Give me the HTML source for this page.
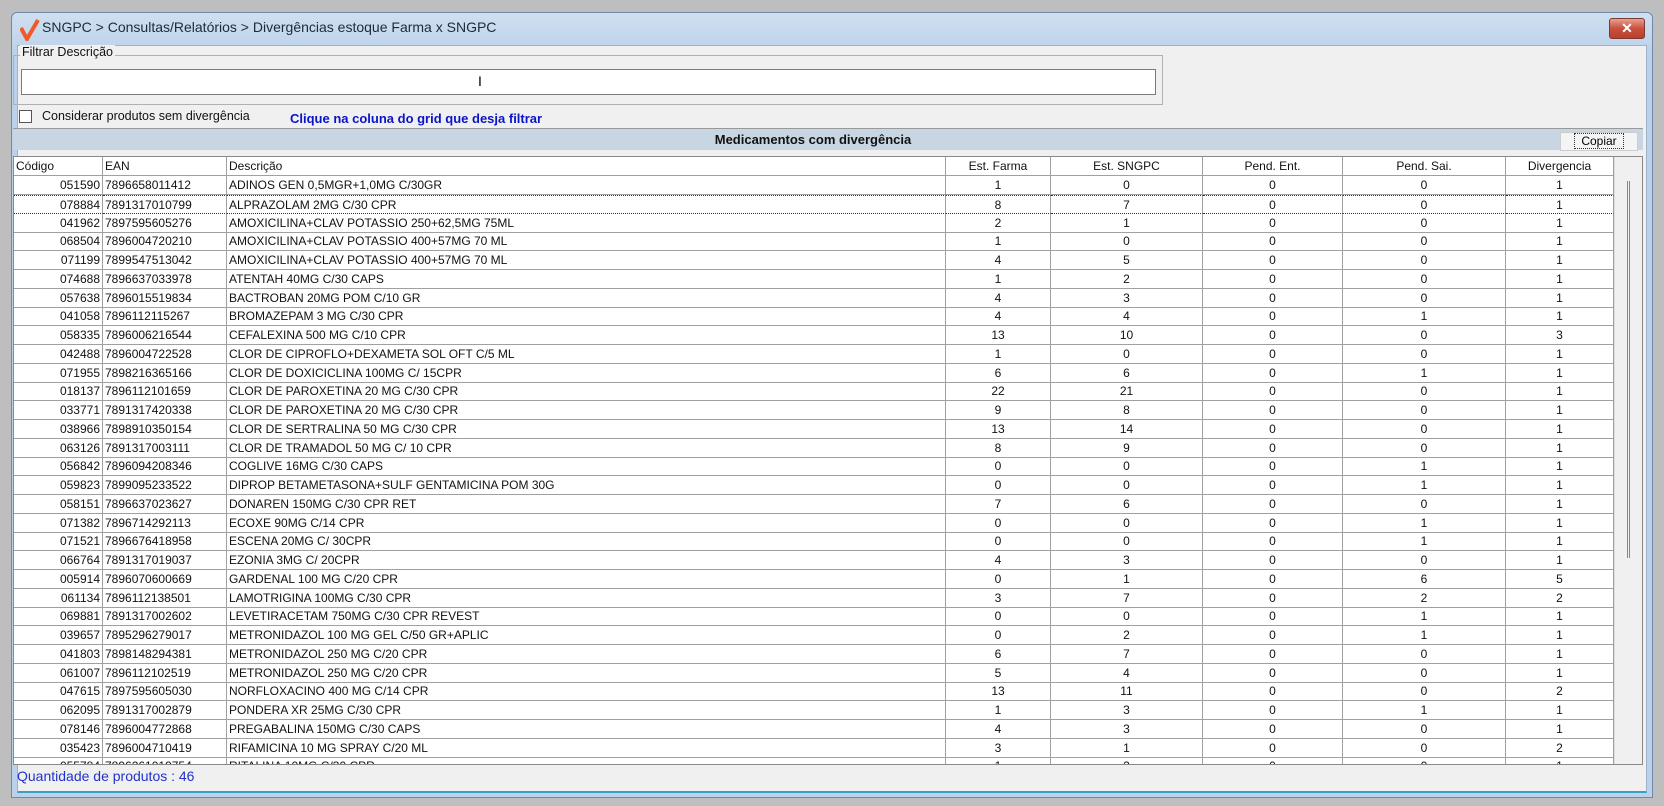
<!DOCTYPE html>
<html><head><meta charset="utf-8"><style>
*{box-sizing:border-box;margin:0;padding:0}
body{width:1664px;height:806px;background:#bebebe;font-family:"Liberation Sans",Arial,sans-serif;position:relative;overflow:hidden}
.win{position:absolute;left:11px;top:12px;width:1642px;height:786px;background:linear-gradient(#cfdff0,#bcd2ea 40px);border:1px solid #6f8aa8;border-radius:6px 6px 0 0}
.body{position:absolute;left:5px;top:32px;width:1630px;height:748px;background:#f0f0f0;border:1px solid #9fb3c8;border-bottom:2px solid #3aa0c0}
.title{position:absolute;left:42px;top:19px;font-size:14px;color:#1d2a3a}
.close{position:absolute;left:1609px;top:18px;width:36px;height:21px;border:1px solid #7a3a30;border-radius:3px;background:linear-gradient(#e8a091,#c9503c 50%,#b8402c);color:#fff;font-weight:bold;font-size:14px;text-align:center;line-height:19px}
.abs{position:absolute}
.grp{left:13px;top:55px;width:1150px;height:50px;border:1px solid #b0b0b0}
.lbl{left:20px;top:45px;font-size:12.5px;background:#f0f0f0;padding:0 2px;color:#111}
.inp{left:21px;top:69px;width:1135px;height:26px;background:#fff;border:1px solid #7a7a7a}
.chk{left:19px;top:110px;width:13px;height:13px;background:#fff;border:1px solid #555}
.ct{left:42px;top:109px;font-size:12.5px;color:#111}
.blue{left:290px;top:111px;font-size:13px;font-weight:bold;color:#0a14c8}
.hdr{left:13px;top:128px;width:1630px;height:22px;background:#c8d5e2;border-top:1px solid #999}
.hdr span{position:absolute;left:0;width:1600px;text-align:center;top:3px;font-weight:bold;font-size:13px;color:#111}
.cop{left:1560px;top:132px;width:78px;height:19px;background:#f4f4f4;border:1px solid #ccc;font-size:12px;text-align:center;line-height:17px}
.cop span{border:1px dotted #333;padding:0 6px}
.grid{left:13px;top:156px;width:1630px;height:609px;background:#fff;border:1px solid #888;overflow:hidden}
.row{position:absolute;left:0;height:19px;white-space:nowrap;font-size:12px;color:#111}
.row div{display:inline-block;height:19px;line-height:18px;border-right:1px solid #a0a0a0;border-bottom:1px solid #a0a0a0;overflow:hidden;vertical-align:top;padding:0 2px}
.h div{background:#fff;font-size:12px}
.c1{width:89px;text-align:right}.c2{width:124px}.c3{width:719px}.c4{width:105px;text-align:center}.c5{width:152px;text-align:center}.c6{width:140px;text-align:center}.c7{width:163px;text-align:center}.c8{width:108px;text-align:center}
.h .c1{text-align:left}
.sb{left:1600px;top:0;width:28px;height:609px;background:#f0f0f0;border-left:1px solid #ddd}
.sb i{position:absolute;left:12px;top:24px;width:3px;height:377px;border-left:1px solid #888;border-right:1px solid #888}
.sel div{border-top:1px dotted #333;border-bottom:1px dotted #333}
.st{left:17px;top:768px;font-size:14px;color:#2233cc}
</style></head><body>
<div class="win">
<svg class="abs" style="left:8px;top:6px" width="20" height="22" viewBox="0 0 20 22"><path d="M1 9 L7 20 L18 1" stroke="#f05a28" stroke-width="4" fill="none"/></svg>
<div class="body"></div>
</div>
<div class="title abs">SNGPC &gt; Consultas/Relatórios &gt; Divergências estoque Farma x SNGPC</div>
<div class="close">✕</div>
<div class="abs grp"></div>
<div class="abs lbl">Filtrar Descrição</div>
<div class="abs inp"></div>
<div class="abs" style="left:478px;top:73px;font-size:14px">I</div>
<div class="abs chk"></div>
<div class="abs ct">Considerar produtos sem divergência</div>
<div class="abs blue">Clique na coluna do grid que desja filtrar</div>
<div class="abs hdr"><span>Medicamentos com divergência</span></div>
<div class="abs cop"><span>Copiar</span></div>
<div class="abs grid">
<div class="row h" style="top:0"><div class="c1">Código</div><div class="c2">EAN</div><div class="c3">Descrição</div><div class="c4">Est. Farma</div><div class="c5">Est. SNGPC</div><div class="c6">Pend. Ent.</div><div class="c7">Pend. Sai.</div><div class="c8">Divergencia</div></div>
<div class="row" style="top:19px"><div class="c1">051590</div><div class="c2">7896658011412</div><div class="c3">ADINOS GEN 0,5MGR+1,0MG C/30GR</div><div class="c4">1</div><div class="c5">0</div><div class="c6">0</div><div class="c7">0</div><div class="c8">1</div></div>
<div class="row sel" style="top:37.75px"><div class="c1">078884</div><div class="c2">7891317010799</div><div class="c3">ALPRAZOLAM 2MG C/30 CPR</div><div class="c4">8</div><div class="c5">7</div><div class="c6">0</div><div class="c7">0</div><div class="c8">1</div></div>
<div class="row" style="top:56.5px"><div class="c1">041962</div><div class="c2">7897595605276</div><div class="c3">AMOXICILINA+CLAV POTASSIO 250+62,5MG 75ML</div><div class="c4">2</div><div class="c5">1</div><div class="c6">0</div><div class="c7">0</div><div class="c8">1</div></div>
<div class="row" style="top:75.25px"><div class="c1">068504</div><div class="c2">7896004720210</div><div class="c3">AMOXICILINA+CLAV POTASSIO 400+57MG 70 ML</div><div class="c4">1</div><div class="c5">0</div><div class="c6">0</div><div class="c7">0</div><div class="c8">1</div></div>
<div class="row" style="top:94px"><div class="c1">071199</div><div class="c2">7899547513042</div><div class="c3">AMOXICILINA+CLAV POTASSIO 400+57MG 70 ML</div><div class="c4">4</div><div class="c5">5</div><div class="c6">0</div><div class="c7">0</div><div class="c8">1</div></div>
<div class="row" style="top:112.75px"><div class="c1">074688</div><div class="c2">7896637033978</div><div class="c3">ATENTAH 40MG C/30 CAPS</div><div class="c4">1</div><div class="c5">2</div><div class="c6">0</div><div class="c7">0</div><div class="c8">1</div></div>
<div class="row" style="top:131.5px"><div class="c1">057638</div><div class="c2">7896015519834</div><div class="c3">BACTROBAN 20MG POM C/10 GR</div><div class="c4">4</div><div class="c5">3</div><div class="c6">0</div><div class="c7">0</div><div class="c8">1</div></div>
<div class="row" style="top:150.25px"><div class="c1">041058</div><div class="c2">7896112115267</div><div class="c3">BROMAZEPAM 3 MG C/30 CPR</div><div class="c4">4</div><div class="c5">4</div><div class="c6">0</div><div class="c7">1</div><div class="c8">1</div></div>
<div class="row" style="top:169px"><div class="c1">058335</div><div class="c2">7896006216544</div><div class="c3">CEFALEXINA 500 MG C/10 CPR</div><div class="c4">13</div><div class="c5">10</div><div class="c6">0</div><div class="c7">0</div><div class="c8">3</div></div>
<div class="row" style="top:187.75px"><div class="c1">042488</div><div class="c2">7896004722528</div><div class="c3">CLOR DE CIPROFLO+DEXAMETA SOL OFT C/5 ML</div><div class="c4">1</div><div class="c5">0</div><div class="c6">0</div><div class="c7">0</div><div class="c8">1</div></div>
<div class="row" style="top:206.5px"><div class="c1">071955</div><div class="c2">7898216365166</div><div class="c3">CLOR DE DOXICICLINA 100MG C/ 15CPR</div><div class="c4">6</div><div class="c5">6</div><div class="c6">0</div><div class="c7">1</div><div class="c8">1</div></div>
<div class="row" style="top:225.25px"><div class="c1">018137</div><div class="c2">7896112101659</div><div class="c3">CLOR DE PAROXETINA 20 MG C/30 CPR</div><div class="c4">22</div><div class="c5">21</div><div class="c6">0</div><div class="c7">0</div><div class="c8">1</div></div>
<div class="row" style="top:244px"><div class="c1">033771</div><div class="c2">7891317420338</div><div class="c3">CLOR DE PAROXETINA 20 MG C/30 CPR</div><div class="c4">9</div><div class="c5">8</div><div class="c6">0</div><div class="c7">0</div><div class="c8">1</div></div>
<div class="row" style="top:262.75px"><div class="c1">038966</div><div class="c2">7898910350154</div><div class="c3">CLOR DE SERTRALINA 50 MG C/30 CPR</div><div class="c4">13</div><div class="c5">14</div><div class="c6">0</div><div class="c7">0</div><div class="c8">1</div></div>
<div class="row" style="top:281.5px"><div class="c1">063126</div><div class="c2">7891317003111</div><div class="c3">CLOR DE TRAMADOL 50 MG C/ 10 CPR</div><div class="c4">8</div><div class="c5">9</div><div class="c6">0</div><div class="c7">0</div><div class="c8">1</div></div>
<div class="row" style="top:300.25px"><div class="c1">056842</div><div class="c2">7896094208346</div><div class="c3">COGLIVE 16MG C/30 CAPS</div><div class="c4">0</div><div class="c5">0</div><div class="c6">0</div><div class="c7">1</div><div class="c8">1</div></div>
<div class="row" style="top:319px"><div class="c1">059823</div><div class="c2">7899095233522</div><div class="c3">DIPROP BETAMETASONA+SULF GENTAMICINA POM 30G</div><div class="c4">0</div><div class="c5">0</div><div class="c6">0</div><div class="c7">1</div><div class="c8">1</div></div>
<div class="row" style="top:337.75px"><div class="c1">058151</div><div class="c2">7896637023627</div><div class="c3">DONAREN 150MG C/30 CPR RET</div><div class="c4">7</div><div class="c5">6</div><div class="c6">0</div><div class="c7">0</div><div class="c8">1</div></div>
<div class="row" style="top:356.5px"><div class="c1">071382</div><div class="c2">7896714292113</div><div class="c3">ECOXE 90MG C/14 CPR</div><div class="c4">0</div><div class="c5">0</div><div class="c6">0</div><div class="c7">1</div><div class="c8">1</div></div>
<div class="row" style="top:375.25px"><div class="c1">071521</div><div class="c2">7896676418958</div><div class="c3">ESCENA 20MG C/ 30CPR</div><div class="c4">0</div><div class="c5">0</div><div class="c6">0</div><div class="c7">1</div><div class="c8">1</div></div>
<div class="row" style="top:394px"><div class="c1">066764</div><div class="c2">7891317019037</div><div class="c3">EZONIA 3MG C/ 20CPR</div><div class="c4">4</div><div class="c5">3</div><div class="c6">0</div><div class="c7">0</div><div class="c8">1</div></div>
<div class="row" style="top:412.75px"><div class="c1">005914</div><div class="c2">7896070600669</div><div class="c3">GARDENAL 100 MG C/20 CPR</div><div class="c4">0</div><div class="c5">1</div><div class="c6">0</div><div class="c7">6</div><div class="c8">5</div></div>
<div class="row" style="top:431.5px"><div class="c1">061134</div><div class="c2">7896112138501</div><div class="c3">LAMOTRIGINA 100MG C/30 CPR</div><div class="c4">3</div><div class="c5">7</div><div class="c6">0</div><div class="c7">2</div><div class="c8">2</div></div>
<div class="row" style="top:450.25px"><div class="c1">069881</div><div class="c2">7891317002602</div><div class="c3">LEVETIRACETAM 750MG C/30 CPR REVEST</div><div class="c4">0</div><div class="c5">0</div><div class="c6">0</div><div class="c7">1</div><div class="c8">1</div></div>
<div class="row" style="top:469px"><div class="c1">039657</div><div class="c2">7895296279017</div><div class="c3">METRONIDAZOL 100 MG GEL C/50 GR+APLIC</div><div class="c4">0</div><div class="c5">2</div><div class="c6">0</div><div class="c7">1</div><div class="c8">1</div></div>
<div class="row" style="top:487.75px"><div class="c1">041803</div><div class="c2">7898148294381</div><div class="c3">METRONIDAZOL 250 MG C/20 CPR</div><div class="c4">6</div><div class="c5">7</div><div class="c6">0</div><div class="c7">0</div><div class="c8">1</div></div>
<div class="row" style="top:506.5px"><div class="c1">061007</div><div class="c2">7896112102519</div><div class="c3">METRONIDAZOL 250 MG C/20 CPR</div><div class="c4">5</div><div class="c5">4</div><div class="c6">0</div><div class="c7">0</div><div class="c8">1</div></div>
<div class="row" style="top:525.25px"><div class="c1">047615</div><div class="c2">7897595605030</div><div class="c3">NORFLOXACINO 400 MG C/14 CPR</div><div class="c4">13</div><div class="c5">11</div><div class="c6">0</div><div class="c7">0</div><div class="c8">2</div></div>
<div class="row" style="top:544px"><div class="c1">062095</div><div class="c2">7891317002879</div><div class="c3">PONDERA XR 25MG C/30 CPR</div><div class="c4">1</div><div class="c5">3</div><div class="c6">0</div><div class="c7">1</div><div class="c8">1</div></div>
<div class="row" style="top:562.75px"><div class="c1">078146</div><div class="c2">7896004772868</div><div class="c3">PREGABALINA 150MG C/30 CAPS</div><div class="c4">4</div><div class="c5">3</div><div class="c6">0</div><div class="c7">0</div><div class="c8">1</div></div>
<div class="row" style="top:581.5px"><div class="c1">035423</div><div class="c2">7896004710419</div><div class="c3">RIFAMICINA 10 MG SPRAY C/20 ML</div><div class="c4">3</div><div class="c5">1</div><div class="c6">0</div><div class="c7">0</div><div class="c8">2</div></div>
<div class="row" style="top:600.25px"><div class="c1">055784</div><div class="c2">7896261019754</div><div class="c3">RITALINA 10MG C/30 CPR</div><div class="c4">1</div><div class="c5">2</div><div class="c6">0</div><div class="c7">0</div><div class="c8">1</div></div>
<div class="abs sb"><i></i></div>
</div>
<div class="abs st">Quantidade de produtos : 46</div>
</body></html>
